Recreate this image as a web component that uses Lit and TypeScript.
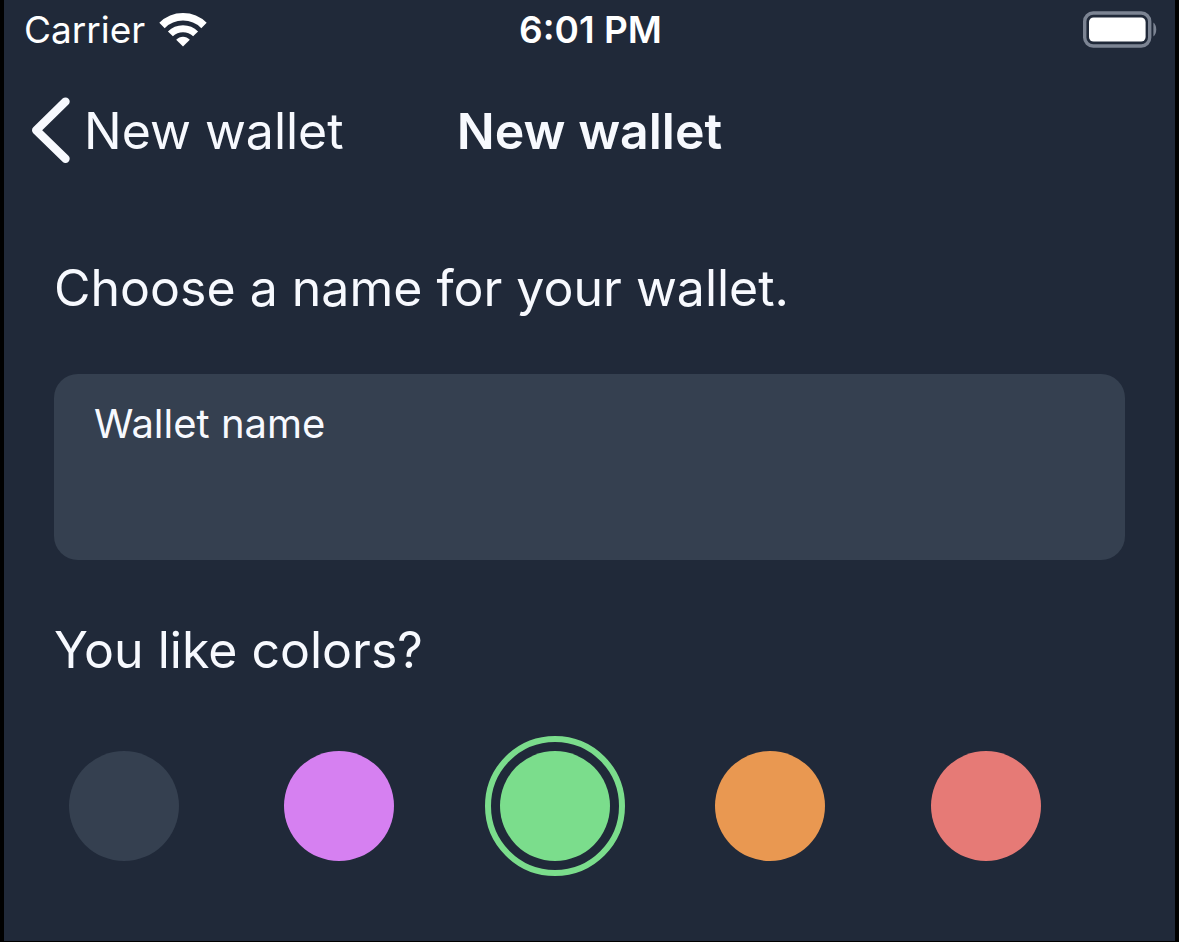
import { LitElement, html, css } from "lit";
import { customElement, state } from "lit/decorators.js";
import { styleMap } from "lit/directives/style-map.js";

interface Swatch {
  name: string;
  color: string;
}

const SWATCHES: Swatch[] = [
  { name: "Slate", color: "#354050" },
  { name: "Purple", color: "#d680f1" },
  { name: "Green", color: "#7bdd8c" },
  { name: "Orange", color: "#e99851" },
  { name: "Red", color: "#e67a76" },
];

@customElement("status-bar")
export class StatusBar extends LitElement {
  static styles = css`
    :host {
      display: grid;
      grid-template-columns: 1fr auto 1fr;
      align-items: center;
      height: 60px;
      padding: 0 18px 0 20px;
      font-size: 37px;
      line-height: 44px;
      color: #ffffff;
    }
    .carrier {
      display: flex;
      align-items: center;
      gap: 14px;
    }
    .time {
      font-weight: 600;
    }
    .battery {
      justify-self: end;
    }
    svg {
      display: block;
    }
  `;

  render() {
    return html`
      <div class="carrier">
        <span>Carrier</span>
        <svg width="48" height="36" viewBox="0 0 48 36" aria-hidden="true">
          <g fill="none" stroke="#fff">
            <path d="M3 13.5A29.7 29.7 0 0 1 45 13.5" stroke-width="7.6" />
            <path d="M11.4 21.9A17.8 17.8 0 0 1 36.6 21.9" stroke-width="7" />
          </g>
          <path d="M24 34.6 17.2 27.8C19.2 25.8 21.4 24.7 24 24.7S28.8 25.8 30.8 27.8Z" fill="#fff" />
        </svg>
      </div>
      <span class="time">6:01 PM</span>
      <svg class="battery" width="76" height="40" viewBox="0 0 76 40" aria-hidden="true">
        <rect x="3.7" y="3" width="65" height="33" rx="8.5" fill="none" stroke="#7c8493" stroke-width="3.4" />
        <rect x="8" y="7.4" width="56.6" height="24.2" rx="4.6" fill="#fff" />
        <path d="M72.4 12.5C76.2 15 76.2 24 72.4 26.5Z" fill="#7c8493" />
      </svg>
    `;
  }
}

@customElement("nav-bar")
export class NavBar extends LitElement {
  static styles = css`
    :host {
      display: grid;
      grid-template-columns: 1fr auto 1fr;
      align-items: center;
      height: 142px;
      padding: 0 24px;
      font-size: 50px;
      line-height: 64px;
    }
    .back {
      display: flex;
      align-items: center;
      gap: 12px;
      justify-self: start;
      padding: 0;
      border: 0;
      background: none;
      color: inherit;
      font: inherit;
      white-space: nowrap;
      cursor: pointer;
    }
    .title {
      margin: 0;
      font-size: inherit;
      font-weight: 600;
      white-space: nowrap;
    }
    svg {
      display: block;
    }
  `;

  render() {
    return html`
      <button class="back" type="button">
        <svg width="44" height="68" viewBox="0 0 44 68" aria-hidden="true">
          <path
            d="M37.5 4.6 8.2 33.2 37.5 61.8"
            fill="none"
            stroke="currentColor"
            stroke-width="8.4"
            stroke-linecap="round"
            stroke-linejoin="round"
          />
        </svg>
        <span>New wallet</span>
      </button>
      <h1 class="title">New wallet</h1>
    `;
  }
}

@customElement("app-root")
export class AppRoot extends LitElement {
  @state() private selected = "Green";
  @state() private walletName = "";

  static styles = css`
    :host {
      display: block;
      box-sizing: border-box;
      min-height: 100vh;
      border: solid #000000;
      border-width: 0 4px 1px;
      background: #202939;
      color: #f7f9fe;
      font-family: Inter, "Liberation Sans", sans-serif;
    }
    .content {
      display: flex;
      flex-direction: column;
      padding: 54px 50px 64px;
    }
    .heading {
      margin: 0;
      font-size: 50px;
      font-weight: 400;
      line-height: 64px;
    }
    .field {
      display: flex;
      flex-direction: column;
      margin: 54px 0 58px;
      padding: 26px 40px 24px;
      border-radius: 24px;
      background: #354050;
    }
    .label {
      font-size: 40px;
      line-height: 48px;
    }
    .input {
      width: 100%;
      height: 88px;
      padding: 0;
      border: 0;
      outline: 0;
      background: none;
      color: inherit;
      font: inherit;
      font-size: 50px;
    }
    .colors {
      margin: 0;
      padding: 0;
      border: 0;
    }
    .swatches {
      display: grid;
      grid-template-columns: repeat(5, 1fr);
      gap: 6px;
      margin-top: 54px;
    }
    .swatch {
      appearance: none;
      box-sizing: border-box;
      width: 140px;
      height: 140px;
      margin: 0;
      padding: 9px;
      border: 6px solid transparent;
      border-radius: 50%;
      background: var(--swatch) content-box;
      cursor: pointer;
    }
    .swatch:checked {
      border-color: var(--swatch);
    }
  `;

  render() {
    return html`
      <status-bar></status-bar>
      <nav-bar></nav-bar>
      <main class="content">
        <h2 class="heading">Choose a name for your wallet.</h2>
        <div class="field">
          <label class="label" for="wallet-name">Wallet name</label>
          <input
            class="input"
            id="wallet-name"
            type="text"
            .value=${this.walletName}
            @input=${(e: Event) => (this.walletName = (e.target as HTMLInputElement).value)}
          />
        </div>
        <h2 class="heading" id="colors-heading">You like colors?</h2>
        <fieldset class="colors" aria-labelledby="colors-heading">
          <div class="swatches">
            ${SWATCHES.map(
              (s) => html`<input
                class="swatch"
                type="radio"
                name="color"
                aria-label=${s.name}
                style=${styleMap({ "--swatch": s.color })}
                .checked=${s.name === this.selected}
                @change=${() => (this.selected = s.name)}
              />`,
            )}
          </div>
        </fieldset>
      </main>
    `;
  }
}
